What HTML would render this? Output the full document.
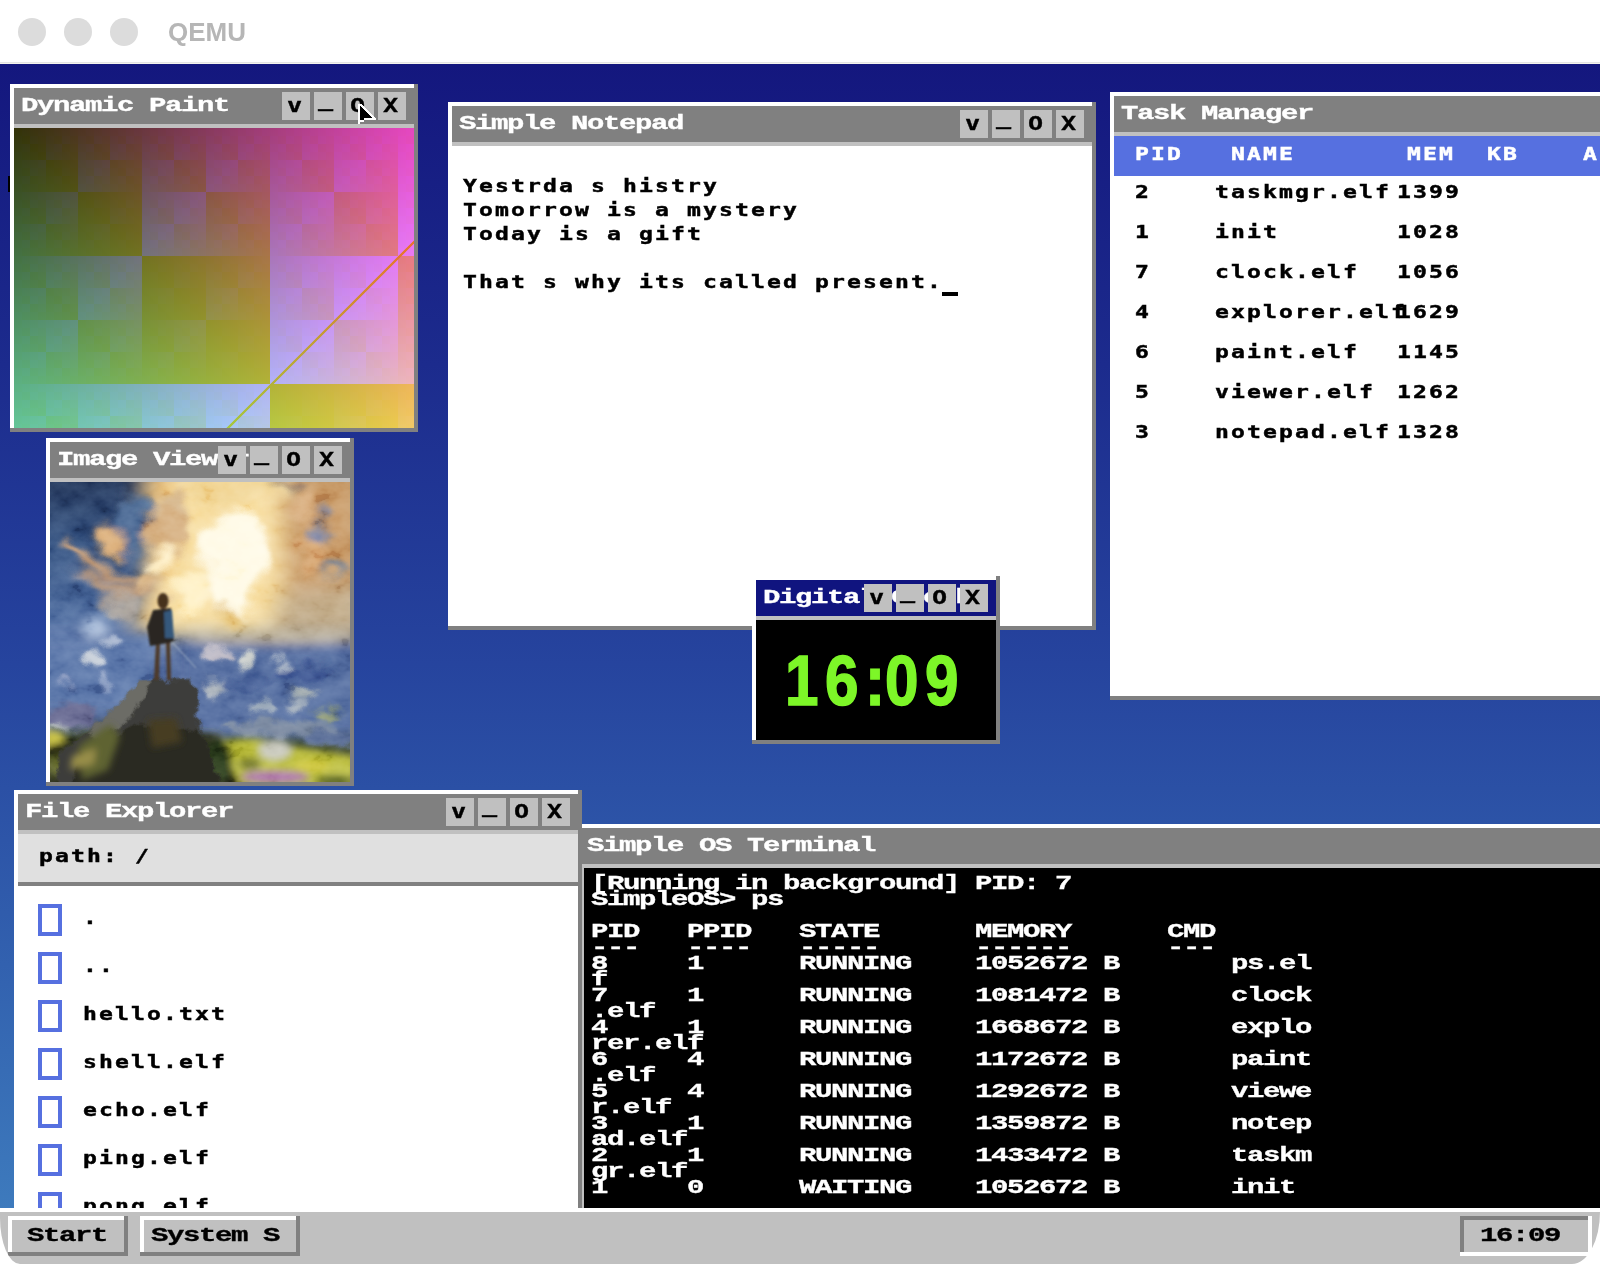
<!DOCTYPE html>
<html><head><meta charset="utf-8"><title>QEMU</title><style>
html,body{margin:0;padding:0;background:#fff}
body{width:1600px;height:1264px;position:relative;overflow:hidden}
div,svg{position:absolute;box-sizing:content-box}
.win{background:#808080}
.a{font-family:"Liberation Mono","DejaVu Sans Mono",monospace;font-weight:bold;font-size:21px;line-height:24px;letter-spacing:-1.008px;white-space:pre;transform:scaleX(1.38);transform-origin:0 0;color:#000;-webkit-text-stroke:0.35px currentColor}
.b{font-family:"DejaVu Sans Mono","Liberation Mono",monospace;font-weight:bold;font-size:18px;line-height:24px;letter-spacing:1.663px;white-space:pre;transform:scaleX(1.28);transform-origin:0 0;color:#000;-webkit-text-stroke:0.45px currentColor}
.c{font-family:"DejaVu Sans Mono","Liberation Mono",monospace;font-weight:bold;font-size:19px;line-height:24px;letter-spacing:0.682px;white-space:pre;transform:scaleX(1.32);transform-origin:0 0;color:#000;-webkit-text-stroke:0.3px currentColor}

.pl{left:0;top:0;width:400px;height:300px;mix-blend-mode:plus-lighter}
.pln{left:0;top:0}
.btn{width:28px;height:28px;background:#c0c0c0;overflow:hidden}
.clk{font-family:"Liberation Sans",sans-serif;font-weight:bold;font-size:70px;line-height:50px;height:50px;color:#7df628;white-space:pre;letter-spacing:7.6px;-webkit-text-stroke:1.5px #7df628;transform:scaleX(.86);transform-origin:0 0}
</style></head><body>
<div style="left:0;top:0;width:1600px;height:62px;background:#fff"></div>
<div style="left:0;top:62px;width:1600px;height:1px;background:#e4e4e4"></div>
<div style="left:0;top:63px;width:1600px;height:1px;background:#f4f3ee"></div>
<div style="left:18px;top:18px;width:28px;height:28px;border-radius:50%;background:#dcdcdc"></div>
<div style="left:64px;top:18px;width:28px;height:28px;border-radius:50%;background:#dcdcdc"></div>
<div style="left:110px;top:18px;width:28px;height:28px;border-radius:50%;background:#dcdcdc"></div>
<div style="left:168px;top:17px;font:bold 26px/30px 'Liberation Sans',sans-serif;color:#b6b6b6;white-space:pre">QEMU</div>
<svg width="0" height="0" style="left:0;top:0"><filter id="p3" x="0" y="0" width="100%" height="100%" color-interpolation-filters="linearRGB"><feColorMatrix type="matrix" values="0.8225 0.1774 0 0 0  0.0332 0.9669 0 0 0  0.0171 0.0724 0.9108 0 0  0 0 0 1 0"/></filter></svg>
<div id="desk" style="left:0;top:64px;width:1600px;height:1200px;overflow:hidden;">
<div style="left:0;top:0;width:1600px;height:1200px;background:linear-gradient(#14177e,rgb(28,43,141) 25%,rgb(38,68,158) 50%,rgb(50,97,175) 75%,#4080c0)"></div>
<div style="left:8px;top:112px;width:2px;height:16px;background:#000;"></div>
<div class="win" style="left:570px;top:760px;width:1100px;height:500px">
<div style="left:0;top:0;width:1096px;height:4px;background:#fff"></div>
<div style="left:0;top:0;width:4px;height:496px;background:#fff"></div>
<div style="left:4px;top:4px;width:1092px;height:36px;background:#808080;overflow:hidden">
</div>
<div style="left:4px;top:40px;width:1092px;height:4px;background:#c0c0c0"></div>
<div style="left:4px;top:44px;width:1092px;height:452px;background:#000"></div>
</div>
<div class="a" style="left:587px;top:770.4px;color:#fff;">Simple OS Terminal</div>
<div style="left:582px;top:800px;width:1018px;height:4px;background:#c0c0c0;"></div>
<div style="left:582px;top:804px;width:2px;height:340px;background:#c0c0c0;"></div>
<div style="left:584px;top:804px;width:1016px;height:340px;background:#000;"></div>
<div class="a" style="left:590.8px;top:808.4px;color:#fff;">[Running in background] PID: 7</div>
<div class="a" style="left:590.8px;top:824.4px;color:#fff;">SimpleOS&gt; ps</div>
<div class="a" style="left:590.8px;top:856.4px;color:#fff;">PID   PPID   STATE      MEMORY      CMD</div>
<div class="a" style="left:590.8px;top:872.4px;color:#fff;">---   ----   -----      ------      ---</div>
<div class="a" style="left:590.8px;top:888.4px;color:#fff;">8     1      RUNNING    1052672 B       ps.el</div>
<div class="a" style="left:590.8px;top:904.4px;color:#fff;">f</div>
<div class="a" style="left:590.8px;top:920.4px;color:#fff;">7     1      RUNNING    1081472 B       clock</div>
<div class="a" style="left:590.8px;top:936.4px;color:#fff;">.elf</div>
<div class="a" style="left:590.8px;top:952.4px;color:#fff;">4     1      RUNNING    1668672 B       explo</div>
<div class="a" style="left:590.8px;top:968.4px;color:#fff;">rer.elf</div>
<div class="a" style="left:590.8px;top:984.4px;color:#fff;">6     4      RUNNING    1172672 B       paint</div>
<div class="a" style="left:590.8px;top:1000.4px;color:#fff;">.elf</div>
<div class="a" style="left:590.8px;top:1016.4px;color:#fff;">5     4      RUNNING    1292672 B       viewe</div>
<div class="a" style="left:590.8px;top:1032.4px;color:#fff;">r.elf</div>
<div class="a" style="left:590.8px;top:1048.4px;color:#fff;">3     1      RUNNING    1359872 B       notep</div>
<div class="a" style="left:590.8px;top:1064.4px;color:#fff;">ad.elf</div>
<div class="a" style="left:590.8px;top:1080.4px;color:#fff;">2     1      RUNNING    1433472 B       taskm</div>
<div class="a" style="left:590.8px;top:1096.4px;color:#fff;">gr.elf</div>
<div class="a" style="left:590.8px;top:1112.4px;color:#fff;">1     0      WAITING    1052672 B       init</div>
<div class="win" style="left:1110px;top:28px;width:700px;height:608px">
<div style="left:0;top:0;width:696px;height:4px;background:#fff"></div>
<div style="left:0;top:0;width:4px;height:604px;background:#fff"></div>
<div style="left:4px;top:4px;width:692px;height:36px;background:#808080;overflow:hidden">
<div class="a" style="left:7px;top:6.4px;color:#fff;">Task Manager</div>
</div>
<div style="left:4px;top:40px;width:692px;height:4px;background:#c0c0c0"></div>
<div style="left:4px;top:44px;width:692px;height:560px;background:#fff"></div>
</div>
<div style="left:1114px;top:72px;width:500px;height:40px;background:#5670e0;"></div>
<div class="b" style="left:1135px;top:77.9px;color:#fff;">PID</div>
<div class="b" style="left:1231px;top:77.9px;color:#fff;">NAME</div>
<div class="b" style="left:1407px;top:77.9px;color:#fff;">MEM  KB</div>
<div class="b" style="left:1583px;top:77.9px;color:#fff;">A</div>
<div class="b" style="left:1135px;top:115.9px;">2</div>
<div class="b" style="left:1215px;top:115.9px;">taskmgr.elf</div>
<div class="b" style="left:1397px;top:115.9px;">1399</div>
<div class="b" style="left:1135px;top:155.9px;">1</div>
<div class="b" style="left:1215px;top:155.9px;">init</div>
<div class="b" style="left:1397px;top:155.9px;">1028</div>
<div class="b" style="left:1135px;top:195.9px;">7</div>
<div class="b" style="left:1215px;top:195.9px;">clock.elf</div>
<div class="b" style="left:1397px;top:195.9px;">1056</div>
<div class="b" style="left:1135px;top:235.9px;">4</div>
<div class="b" style="left:1215px;top:235.9px;">explorer.elf</div>
<div class="b" style="left:1397px;top:235.9px;">1629</div>
<div class="b" style="left:1135px;top:275.9px;">6</div>
<div class="b" style="left:1215px;top:275.9px;">paint.elf</div>
<div class="b" style="left:1397px;top:275.9px;">1145</div>
<div class="b" style="left:1135px;top:315.9px;">5</div>
<div class="b" style="left:1215px;top:315.9px;">viewer.elf</div>
<div class="b" style="left:1397px;top:315.9px;">1262</div>
<div class="b" style="left:1135px;top:355.9px;">3</div>
<div class="b" style="left:1215px;top:355.9px;">notepad.elf</div>
<div class="b" style="left:1397px;top:355.9px;">1328</div>
<div class="win" style="left:448px;top:38px;width:648px;height:528px">
<div style="left:0;top:0;width:644px;height:4px;background:#fff"></div>
<div style="left:0;top:0;width:4px;height:524px;background:#fff"></div>
<div style="left:4px;top:4px;width:640px;height:36px;background:#808080;overflow:hidden">
<div class="a" style="left:7px;top:6.4px;color:#fff;">Simple Notepad</div>
</div>
<div style="left:4px;top:40px;width:640px;height:4px;background:#c0c0c0"></div>
<div style="left:4px;top:44px;width:640px;height:480px;background:#fff"></div>
<div class="btn" style="left:608px;top:8px">
<div class="c" style="left:5px;top:0.7px;">X</div>
</div>
<div class="btn" style="left:576px;top:8px">
<div class="c" style="left:3.5px;top:0.7px;">O</div>
</div>
<div class="btn" style="left:544px;top:8px">
<div class="c" style="left:3.5px;top:-4.9px;">_</div>
</div>
<div class="btn" style="left:512px;top:8px">
<div class="c" style="left:5px;top:0.9px;">v</div>
</div>
</div>
<div class="b" style="left:463px;top:109.9px;">Yestrda s histry</div>
<div class="b" style="left:463px;top:133.9px;">Tomorrow is a mystery</div>
<div class="b" style="left:463px;top:157.9px;">Today is a gift</div>
<div class="b" style="left:463px;top:205.9px;">That s why its called present.</div>
<div style="left:942px;top:228px;width:16px;height:4px;background:#000;"></div>
<div class="win" style="left:10px;top:20px;width:408px;height:348px">
<div style="left:0;top:0;width:404px;height:4px;background:#fff"></div>
<div style="left:0;top:0;width:4px;height:344px;background:#fff"></div>
<div style="left:4px;top:4px;width:400px;height:36px;background:#808080;overflow:hidden">
<div class="a" style="left:7px;top:6.4px;color:#fff;">Dynamic Paint</div>
</div>
<div style="left:4px;top:40px;width:400px;height:4px;background:#c0c0c0"></div>
<div style="left:4px;top:44px;width:400px;height:300px;background:#fff"></div>
<div class="btn" style="left:368px;top:8px">
<div class="c" style="left:5px;top:0.7px;">X</div>
</div>
<div class="btn" style="left:336px;top:8px">
<div class="c" style="left:3.5px;top:0.7px;">O</div>
</div>
<div class="btn" style="left:304px;top:8px">
<div class="c" style="left:3.5px;top:-4.9px;">_</div>
</div>
<div class="btn" style="left:272px;top:8px">
<div class="c" style="left:5px;top:0.9px;">v</div>
</div>
</div>
<div id="paint" style="left:14px;top:64px;width:400px;height:300px;overflow:hidden;isolation:isolate;background:#000;filter:url(#p3)">
<div class="pl" style="background:linear-gradient(90deg,rgb(50,0,0),rgb(250,0,0))"></div>
<div class="pl" style="background:linear-gradient(180deg,rgb(0,50,0),rgb(0,200,0))"></div>
<div class="pl" style="background:conic-gradient(rgb(0,0,4) 25%,#000 0 50%,rgb(0,0,4) 0 75%,#000 0) 0 0/16px 16px"></div>
<div class="pl" style="background:conic-gradient(rgb(0,0,8) 25%,#000 0 50%,rgb(0,0,8) 0 75%,#000 0) 0 0/32px 32px"></div>
<div class="pl" style="background:conic-gradient(rgb(0,0,16) 25%,#000 0 50%,rgb(0,0,16) 0 75%,#000 0) 0 0/64px 64px"></div>
<div class="pl" style="background:conic-gradient(rgb(0,0,32) 25%,#000 0 50%,rgb(0,0,32) 0 75%,#000 0) 0 0/128px 128px"></div>
<div class="pl" style="background:conic-gradient(rgb(0,0,64) 25%,#000 0 50%,rgb(0,0,64) 0 75%,#000 0) 0 0/256px 256px"></div>
<div class="pl" style="background:conic-gradient(rgb(0,0,128) 25%,#000 0 50%,rgb(0,0,128) 0 75%,#000 0) 0 0/512px 512px"></div>
<svg class="pln" width="400" height="300" viewBox="0 0 400 300"><defs><linearGradient id="lg" x1="214" y1="300" x2="400" y2="114" gradientUnits="userSpaceOnUse"><stop offset="0" stop-color="rgb(157,200,0)"/><stop offset="1" stop-color="rgb(250,107,0)"/></linearGradient></defs><path d="M213,301 L401,113" stroke="url(#lg)" stroke-width="2.2" fill="none"/></svg>
</div>
<div class="win" style="left:46px;top:374px;width:308px;height:348px">
<div style="left:0;top:0;width:304px;height:4px;background:#fff"></div>
<div style="left:0;top:0;width:4px;height:344px;background:#fff"></div>
<div style="left:4px;top:4px;width:300px;height:36px;background:#808080;overflow:hidden">
<div class="a" style="left:7px;top:6.4px;color:#fff;">Image Viewer</div>
</div>
<div style="left:4px;top:40px;width:300px;height:4px;background:#c0c0c0"></div>
<div style="left:4px;top:44px;width:300px;height:300px;background:#fff"></div>
<div class="btn" style="left:268px;top:8px">
<div class="c" style="left:5px;top:0.7px;">X</div>
</div>
<div class="btn" style="left:236px;top:8px">
<div class="c" style="left:3.5px;top:0.7px;">O</div>
</div>
<div class="btn" style="left:204px;top:8px">
<div class="c" style="left:3.5px;top:-4.9px;">_</div>
</div>
<div class="btn" style="left:172px;top:8px">
<div class="c" style="left:5px;top:0.9px;">v</div>
</div>
</div>
<div id="img" style="left:50px;top:418px;width:300px;height:300px;background:#678;overflow:hidden">
<svg width="300" height="300" viewBox="0 0 300 300" style="left:0;top:0">
<defs>
<filter id="f12" x="-30%" y="-30%" width="160%" height="160%"><feGaussianBlur stdDeviation="11"/></filter>
<filter id="f7" x="-30%" y="-30%" width="160%" height="160%"><feGaussianBlur stdDeviation="6"/></filter>
<filter id="f4" x="-30%" y="-30%" width="160%" height="160%"><feGaussianBlur stdDeviation="3.5"/></filter>
<filter id="f2" x="-30%" y="-30%" width="160%" height="160%"><feGaussianBlur stdDeviation="1.8"/></filter>
<filter id="d7" x="-30%" y="-30%" width="160%" height="160%"><feGaussianBlur stdDeviation="4.5" result="b"/><feTurbulence type="fractalNoise" baseFrequency="0.022 0.03" numOctaves="3" seed="4" result="t"/><feDisplacementMap in="b" in2="t" scale="38" xChannelSelector="R" yChannelSelector="G"/></filter>
<filter id="d4" x="-30%" y="-30%" width="160%" height="160%"><feGaussianBlur stdDeviation="2.5" result="b"/><feTurbulence type="fractalNoise" baseFrequency="0.04 0.05" numOctaves="3" seed="9" result="t"/><feDisplacementMap in="b" in2="t" scale="22" xChannelSelector="R" yChannelSelector="G"/></filter>
<filter id="d2" x="-30%" y="-30%" width="160%" height="160%"><feGaussianBlur stdDeviation="1.2" result="b"/><feTurbulence type="fractalNoise" baseFrequency="0.08 0.08" numOctaves="3" seed="5" result="t"/><feDisplacementMap in="b" in2="t" scale="12" xChannelSelector="R" yChannelSelector="G"/></filter>
<filter id="f1" x="-30%" y="-30%" width="160%" height="160%"><feGaussianBlur stdDeviation="0.8"/></filter>
<filter id="nz" x="0" y="0" width="100%" height="100%"><feTurbulence type="fractalNoise" baseFrequency="0.035 0.05" numOctaves="4" seed="7"/><feColorMatrix type="matrix" values="1.9 0 0 0 -0.47  1.9 0 0 0 -0.47  1.9 0 0 0 -0.47  0 0 0 0 1"/></filter>
<linearGradient id="sky" x1="0" y1="0" x2="0" y2="1">
<stop offset="0" stop-color="#1e3054"/><stop offset=".2" stop-color="#2f4c7b"/><stop offset=".45" stop-color="#48669a"/><stop offset=".55" stop-color="#48629a"/><stop offset=".78" stop-color="#465a86"/><stop offset=".86" stop-color="#3e4a34"/><stop offset="1" stop-color="#2a2e18"/>
</linearGradient>
</defs>
<rect width="300" height="300" fill="url(#sky)"/>
<g filter="url(#f12)">
<path d="M95,-20 L320,-20 L320,150 L80,152 L96,96 L88,40Z" fill="#e4b56c"/>
<path d="M232,-20 L320,-20 L320,112 L236,112 L226,60Z" fill="#c69662"/>
<path d="M222,112 L320,100 L320,158 L214,158Z" fill="#bfa884"/>
<path d="M122,-20 L232,-20 L234,100 L216,156 L92,156 L112,92Z" fill="#f7dc9c"/>
</g>
<g filter="url(#d7)">
<ellipse cx="184" cy="84" rx="30" ry="54" fill="#fffae6"/>
<ellipse cx="186" cy="8" rx="48" ry="14" fill="#f1d492"/>
<ellipse cx="120" cy="30" rx="20" ry="24" fill="#d6b68a"/>
<ellipse cx="140" cy="112" rx="16" ry="24" fill="#fff1c6"/>
<ellipse cx="109" cy="78" rx="10" ry="10" fill="#fff0c8"/>
<ellipse cx="82" cy="45" rx="18" ry="26" fill="#45648f"/>
<path d="M44,48 C52,38 70,40 76,52 C80,64 70,72 60,70 C50,66 44,58 44,48Z" fill="#d0a070"/>
<path d="M14,64 C40,72 60,86 90,92 L96,100 C60,98 36,86 12,74Z" fill="#c8986c"/>
<ellipse cx="40" cy="98" rx="22" ry="5" fill="#8f95a6"/>
<path d="M28,88 C55,98 85,104 112,108 L108,120 C80,116 50,108 24,96Z" fill="#b8906c"/>
<ellipse cx="118" cy="48" rx="24" ry="20" fill="#d4ac7c"/>
<ellipse cx="100" cy="100" rx="16" ry="12" fill="#d8b484"/>
<ellipse cx="60" cy="58" rx="14" ry="12" fill="#dcae78"/>
<ellipse cx="72" cy="122" rx="14" ry="12" fill="#a8a098"/>
<ellipse cx="273" cy="47" rx="10" ry="14" fill="#7880a0"/>
<ellipse cx="286" cy="90" rx="16" ry="5" fill="#687890"/>
<ellipse cx="236" cy="3" rx="14" ry="5" fill="#84695a"/>
<ellipse cx="262" cy="72" rx="12" ry="22" fill="#d8a874"/>
<ellipse cx="250" cy="25" rx="14" ry="12" fill="#d8ac7c"/>
<ellipse cx="178" cy="138" rx="13" ry="13" fill="#e8c880"/>
</g>
<g filter="url(#f7)">
<rect x="-20" y="153" width="130" height="80" fill="#5672a6"/>
<rect x="128" y="160" width="200" height="95" fill="#50689c"/>
<ellipse cx="225" cy="155" rx="90" ry="5" fill="#d2c29e"/>
<ellipse cx="45" cy="145" rx="14" ry="10" fill="#b4c6e0"/>
</g>
<g filter="url(#d4)">
<ellipse cx="46" cy="178" rx="12" ry="9" fill="#c6ced8"/>
<ellipse cx="60" cy="158" rx="12" ry="5" fill="#aab8d0"/>
<ellipse cx="15" cy="200" rx="7" ry="5" fill="#8a9ac0"/>
<ellipse cx="55" cy="200" rx="6" ry="8" fill="#8ea0c4"/>
<ellipse cx="20" cy="235" rx="26" ry="13" fill="#666890"/>
<ellipse cx="10" cy="248" rx="14" ry="3" fill="#a8b0b8"/>
<ellipse cx="165" cy="170" rx="16" ry="7" fill="#b8b4c0"/>
<ellipse cx="195" cy="178" rx="11" ry="7" fill="#c8ccc8"/>
<ellipse cx="232" cy="180" rx="6" ry="5" fill="#a8b4c4"/>
<ellipse cx="165" cy="207" rx="12" ry="7" fill="#b0b8c0"/>
<ellipse cx="212" cy="227" rx="12" ry="6" fill="#9aa8b8"/>
<ellipse cx="247" cy="222" rx="10" ry="5" fill="#a4b0bc"/>
<ellipse cx="255" cy="212" rx="12" ry="4" fill="#b0b8b4"/>
<ellipse cx="275" cy="232" rx="14" ry="6" fill="#8c9874"/>
<ellipse cx="255" cy="190" rx="30" ry="8" fill="#3a5290"/>
<ellipse cx="200" cy="200" rx="25" ry="7" fill="#3e5690"/>
<ellipse cx="230" cy="246" rx="60" ry="8" fill="#74849c"/>
<ellipse cx="280" cy="255" rx="30" ry="8" fill="#566a94"/>
</g>
<g filter="url(#f4)">
<path d="M166,262 C185,254 215,256 240,264 L305,274 L305,305 L170,305Z" fill="#b9bb3a"/>
<path d="M-5,249 C5,247 12,250 16,256 L10,264 L-5,264Z" fill="#c8c040"/>
<path d="M-5,266 L40,250 L90,244 L170,252 L190,305 L-5,305Z" fill="#2b2e1a"/>
<ellipse cx="225" cy="268" rx="16" ry="10" fill="#c8c8bc"/>
<ellipse cx="22" cy="282" rx="26" ry="14" fill="#5c6228"/>
<ellipse cx="225" cy="295" rx="34" ry="6" fill="#a868a8"/>
<ellipse cx="285" cy="298" rx="20" ry="5" fill="#44541e"/>
<ellipse cx="168" cy="280" rx="14" ry="22" fill="#2c3a1a"/>
<ellipse cx="200" cy="282" rx="12" ry="6" fill="#6a7028"/>
<ellipse cx="262" cy="284" rx="18" ry="6" fill="#d0c840"/>
</g>
<rect width="300" height="300" filter="url(#nz)" style="mix-blend-mode:soft-light" opacity=".4"/>
<g filter="url(#d2)">
<path d="M92,198 L140,197 L147,212 L150,250 L172,305 L10,305 L6,272 L40,250Z" fill="#3c3c3a"/>
<path d="M92,198 L102,199 L82,234 L46,260 L40,250Z" fill="#6c6c66"/>
<path d="M30,270 L90,240 L150,250 L172,305 L20,305Z" fill="#2c2b20"/>
</g>
<g filter="url(#f4)">
<path d="M98,238 L126,236 L132,260 L102,266Z" fill="#463c22"/>
<path d="M28,264 L60,242 L70,254 L58,288 L32,298Z" fill="#5e6430"/>
<path d="M22,274 L46,266 L44,282 L20,288Z" fill="#988e4a"/>
</g>
<g filter="url(#f1)">
<path d="M106,160 L110,160 L109,198 L104,198Z M116,160 L120,160 L121,198 L117,198Z" fill="#4e3a2c"/>
<path d="M103,128 L121,126 L124,160 L100,164 L97,145Z" fill="#2a2624"/>
<path d="M114,130 L122,128 L124,156 L115,156Z" fill="#35587c"/>
<ellipse cx="113" cy="119" rx="5.5" ry="8" fill="#47301f"/>
<path d="M122,160 L146,186" stroke="#b8c4d0" stroke-width="1" fill="none"/>
</g>
</svg>
</div>
<div class="win" style="left:14px;top:726px;width:568px;height:500px">
<div style="left:0;top:0;width:564px;height:4px;background:#fff"></div>
<div style="left:0;top:0;width:4px;height:496px;background:#fff"></div>
<div style="left:4px;top:4px;width:560px;height:36px;background:#808080;overflow:hidden">
<div class="a" style="left:7px;top:6.4px;color:#fff;">File Explorer</div>
</div>
<div style="left:4px;top:40px;width:560px;height:4px;background:#c0c0c0"></div>
<div style="left:4px;top:44px;width:560px;height:452px;background:#fff"></div>
<div class="btn" style="left:528px;top:8px">
<div class="c" style="left:5px;top:0.7px;">X</div>
</div>
<div class="btn" style="left:496px;top:8px">
<div class="c" style="left:3.5px;top:0.7px;">O</div>
</div>
<div class="btn" style="left:464px;top:8px">
<div class="c" style="left:3.5px;top:-4.9px;">_</div>
</div>
<div class="btn" style="left:432px;top:8px">
<div class="c" style="left:5px;top:0.9px;">v</div>
</div>
</div>
<div style="left:18px;top:770px;width:560px;height:48px;background:#e0e0e0;"></div>
<div style="left:18px;top:818px;width:560px;height:4px;background:#808080;"></div>
<div class="b" style="left:39px;top:779.9px;">path: /</div>
<div style="left:38px;top:840px;width:16px;height:24px;border:4px solid #5670e0;background:#fff"></div>
<div class="b" style="left:83px;top:841.9px;">.</div>
<div style="left:38px;top:888px;width:16px;height:24px;border:4px solid #5670e0;background:#fff"></div>
<div class="b" style="left:83px;top:889.9px;">..</div>
<div style="left:38px;top:936px;width:16px;height:24px;border:4px solid #5670e0;background:#fff"></div>
<div class="b" style="left:83px;top:937.9px;">hello.txt</div>
<div style="left:38px;top:984px;width:16px;height:24px;border:4px solid #5670e0;background:#fff"></div>
<div class="b" style="left:83px;top:985.9px;">shell.elf</div>
<div style="left:38px;top:1032px;width:16px;height:24px;border:4px solid #5670e0;background:#fff"></div>
<div class="b" style="left:83px;top:1033.9px;">echo.elf</div>
<div style="left:38px;top:1080px;width:16px;height:24px;border:4px solid #5670e0;background:#fff"></div>
<div class="b" style="left:83px;top:1081.9px;">ping.elf</div>
<div style="left:38px;top:1128px;width:16px;height:24px;border:4px solid #5670e0;background:#fff"></div>
<div class="b" style="left:83px;top:1129.9px;">pong.elf</div>
<div class="win" style="left:752px;top:512px;width:248px;height:168px">
<div style="left:0;top:0;width:244px;height:4px;background:#fff"></div>
<div style="left:0;top:0;width:4px;height:164px;background:#fff"></div>
<div style="left:4px;top:4px;width:240px;height:36px;background:#10147f;overflow:hidden">
<div class="a" style="left:7px;top:6.4px;color:#fff;">Digital Clock</div>
</div>
<div style="left:4px;top:40px;width:240px;height:4px;background:#c0c0c0"></div>
<div style="left:4px;top:44px;width:240px;height:120px;background:#000"></div>
<div class="btn" style="left:208px;top:8px">
<div class="c" style="left:5px;top:0.7px;">X</div>
</div>
<div class="btn" style="left:176px;top:8px">
<div class="c" style="left:3.5px;top:0.7px;">O</div>
</div>
<div class="btn" style="left:144px;top:8px">
<div class="c" style="left:3.5px;top:-4.9px;">_</div>
</div>
<div class="btn" style="left:112px;top:8px">
<div class="c" style="left:5px;top:0.9px;">v</div>
</div>
</div>
<div class="clk" style="left:784.7px;top:592px">16<span style="letter-spacing:0">:</span>09</div>
<div style="left:0px;top:1144px;width:1600px;height:4px;background:#fff;"></div>
<div style="left:0px;top:1148px;width:1600px;height:52px;background:#c0c0c0;"></div>
<div style="left:8px;top:1152px;width:120px;height:40px;background:#808080"><div style="left:0;top:0;width:116px;height:36px;background:#fff"></div><div style="left:4px;top:4px;width:112px;height:32px;background:#c0c0c0"></div></div>
<div class="a" style="left:27px;top:1160.4px;">Start</div>
<div style="left:140px;top:1152px;width:160px;height:40px;background:#808080"><div style="left:0;top:0;width:156px;height:36px;background:#fff"></div><div style="left:4px;top:4px;width:152px;height:32px;background:#c0c0c0"></div></div>
<div class="a" style="left:151px;top:1160.4px;">System S</div>
<div style="left:1460px;top:1152px;width:132px;height:40px;background:#fff"><div style="left:0;top:0;width:128px;height:36px;background:#808080"></div><div style="left:4px;top:4px;width:124px;height:32px;background:#c0c0c0"></div></div>
<div class="a" style="left:1480px;top:1160.4px;">16:09</div>
<svg style="left:350px;top:32px" width="40" height="40" viewBox="350 96 40 40" shape-rendering="crispEdges"><polygon points="358,104 361,104 376,118 376,120 364,120 364,122 360,122 360,124 358,124" fill="#fff"/><polygon points="360,105.5 372.5,118 364,118 364,120 360,120" fill="#000"/></svg>
</div>
<svg style="left:0;top:1204px" width="1600" height="60" viewBox="0 1204 1600 60"><path d="M0,1264 L0,1218 A20,46 0 0 0 20,1264Z M1600,1264 L1600,1212 A28,52 0 0 1 1572,1264Z" fill="#fff"/></svg>
</body></html>
